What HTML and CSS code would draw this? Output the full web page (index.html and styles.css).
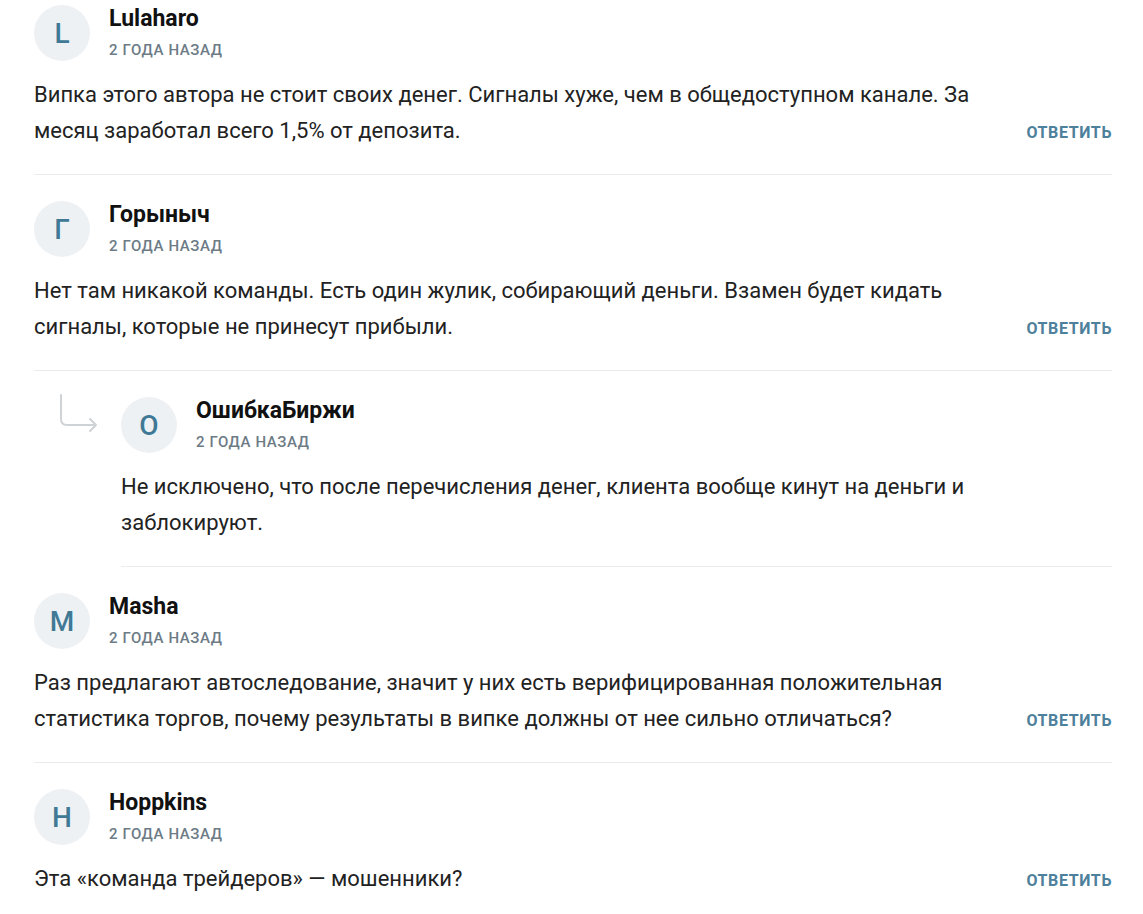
FILE: index.html
```html
<!DOCTYPE html>
<html>
<head>
    <link rel="stylesheet" href="styles.css">
</head>
<body>
    <div class="comments">
        <div class="comment">
            <div class="comment-head">
                <div class="avatar">L</div>
                <div class="author">
                    <div class="author-name">Lulaharo</div>
                    <div class="comment-date">2 года назад</div>
                </div>
            </div>
            <div class="comment-body">
                <p class="comment-text">Випка этого автора не стоит своих денег. Сигналы хуже, чем в общедоступном канале. За месяц заработал всего 1,5% от депозита.</p>
                <a href="#" class="reply-link">Ответить</a>
            </div>
        </div>

        <div class="comment">
            <div class="comment-head">
                <div class="avatar">Г</div>
                <div class="author">
                    <div class="author-name">Горыныч</div>
                    <div class="comment-date">2 года назад</div>
                </div>
            </div>
            <div class="comment-body">
                <p class="comment-text">Нет там никакой команды. Есть один жулик, собирающий деньги. Взамен будет кидать сигналы, которые не принесут прибыли.</p>
                <a href="#" class="reply-link">Ответить</a>
            </div>
        </div>

        <!-- reply to the comment above -->
        <div class="reply-row">
            <svg class="reply-arrow" width="87" height="44" viewBox="0 0 87 44">
                <path d="M27 1 V25 Q27 31 33 31 H62 M56 25 L62 31 L56 37" fill="none" stroke="#cfd3d6" stroke-width="2" stroke-linecap="round" stroke-linejoin="round"/>
            </svg>
            <div class="comment">
                <div class="comment-head">
                    <div class="avatar">О</div>
                    <div class="author">
                        <div class="author-name">ОшибкаБиржи</div>
                        <div class="comment-date">2 года назад</div>
                    </div>
                </div>
                <div class="comment-body">
                    <p class="comment-text">Не исключено, что после перечисления денег, клиента вообще кинут на деньги и заблокируют.</p>
                </div>
            </div>
        </div>

        <div class="comment">
            <div class="comment-head">
                <div class="avatar">M</div>
                <div class="author">
                    <div class="author-name">Masha</div>
                    <div class="comment-date">2 года назад</div>
                </div>
            </div>
            <div class="comment-body">
                <p class="comment-text">Раз предлагают автоследование, значит у них есть верифицированная положительная статистика торгов, почему результаты в випке должны от нее сильно отличаться?</p>
                <a href="#" class="reply-link">Ответить</a>
            </div>
        </div>

        <div class="comment">
            <div class="comment-head">
                <div class="avatar">H</div>
                <div class="author">
                    <div class="author-name">Hoppkins</div>
                    <div class="comment-date">2 года назад</div>
                </div>
            </div>
            <div class="comment-body">
                <p class="comment-text">Эта «команда трейдеров» — мошенники?</p>
                <a href="#" class="reply-link">Ответить</a>
            </div>
        </div>
    </div>
</body>
</html>
```

FILE: styles.css
```css
body {
    margin: 0;
    padding: 5px 31px 0 34px;
    background: #fff;
    font-family: Roboto, "Noto Sans", sans-serif;
    color: #222;
}

.comments {
    display: flex;
    flex-direction: column;
}

.comment {
    padding-bottom: 25px;
    margin-bottom: 26px;
    border-bottom: 1px solid #ececec;
}

.comment-head {
    display: flex;
    align-items: flex-start;
    gap: 19px;
}

.avatar {
    width: 56px;
    height: 56px;
    border-radius: 50%;
    background-color: #eef1f4;
    color: #3f7995;
    font-size: 28px;
    font-weight: 500;
    display: flex;
    align-items: center;
    justify-content: center;
    flex-shrink: 0;
}

.author {
    padding-top: 1px;
}

.author-name {
    font-size: 23px;
    font-weight: bold;
    line-height: 26px;
    color: #111;
}

.comment-date {
    margin-top: 9px;
    font-size: 15px;
    font-weight: 500;
    line-height: 18px;
    letter-spacing: 0.6px;
    text-transform: uppercase;
    color: #6c7b86;
}

.comment-body {
    display: flex;
    align-items: flex-end;
    justify-content: space-between;
    margin-top: 16px;
}

.comment-text {
    flex: 1;
    max-width: 960px;
    margin: 0;
    font-size: 22px;
    line-height: 36px;
}

.reply-link {
    font-size: 16px;
    font-weight: bold;
    line-height: 32px;
    letter-spacing: 0.6px;
    text-transform: uppercase;
    text-decoration: none;
    color: #4d809b;
}

.reply-link:hover {
    text-decoration: underline;
}

/* Reply thread */
.reply-row {
    display: flex;
    align-items: flex-start;
}

.reply-row .comment {
    flex: 1;
}

.reply-arrow {
    flex-shrink: 0;
    margin-top: -3px;
}
```
